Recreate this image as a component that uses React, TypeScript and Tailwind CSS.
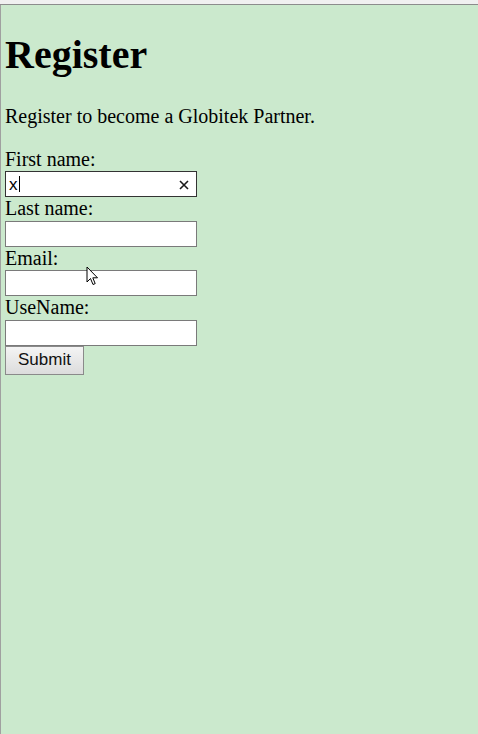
import React from "react";

const serif = { fontFamily: '"Liberation Serif", "Times New Roman", serif' };

function Field({ label, children }: { label: string; children: React.ReactNode }) {
  return (
    <div>
      <div className="h-[23.5px] text-[20px] leading-[23.5px] text-black">{label}</div>
      {children}
    </div>
  );
}

function EmptyInput() {
  return <div className="h-[26px] w-[192px] border border-[#7a7a7a] bg-white" />;
}

export default function App() {
  return (
    <div className="h-[734px] w-[478px] overflow-hidden bg-[#cbe9cd]" style={serif}>
      <div className="h-[5px] border-b border-[#8c8c8c] bg-[#f0f0f0]" />
      <div className="relative h-[729px] border-l border-[#a0a0a0] pl-[4px] pt-[26.8px]">
        <h1 className="text-[40px] font-bold leading-[46px] text-black">Register</h1>
        <p className="mt-[26.8px] text-[20px] leading-[23px] text-black">
          Register to become a Globitek Partner.
        </p>
        <form className="mt-[20px]" onSubmit={(e) => e.preventDefault()}>
          <Field label="First name:">
            <div className="relative flex h-[26px] w-[192px] items-center border border-[#333333] bg-white pl-[3px]">
              <span
                className="text-[17px] leading-none text-black"
                style={{ fontFamily: '"Liberation Sans", Arial, sans-serif' }}
              >
                x
              </span>
              <span className="ml-[1px] h-[16px] w-[1px] bg-black" />
              <svg
                className="absolute right-[7px] top-[7.5px]"
                width="10"
                height="10"
                viewBox="0 0 10 10"
              >
                <path d="M1 1 L9 9 M9 1 L1 9" stroke="#1a1a1a" strokeWidth="1.6" />
              </svg>
            </div>
          </Field>
          <Field label="Last name:">
            <EmptyInput />
          </Field>
          <Field label="Email:">
            <EmptyInput />
          </Field>
          <Field label="UseName:">
            <EmptyInput />
          </Field>
          <button
            type="submit"
            className="flex h-[29px] w-[79px] items-center justify-center border border-[#8a8a8a] bg-gradient-to-b from-[#f4f4f4] to-[#dcdcdc] text-[17px] text-[#111]"
            style={{ fontFamily: '"Liberation Sans", Arial, sans-serif' }}
          >
            Submit
          </button>
        </form>
        <svg
          className="absolute left-[85px] top-[261px]"
          width="13"
          height="20"
          viewBox="0 0 13 20"
        >
          <path
            d="M1 1 L1 16 L4.5 12.5 L7 18.5 L9.2 17.6 L6.8 11.8 L11.5 11.8 Z"
            fill="#ffffff"
            stroke="#000000"
            strokeWidth="1"
            strokeLinejoin="round"
          />
        </svg>
      </div>
    </div>
  );
}
